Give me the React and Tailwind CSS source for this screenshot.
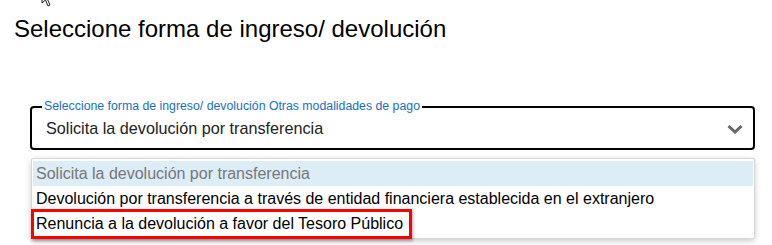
import React from "react";

export default function App() {
  const font = { fontFamily: '"Liberation Sans", Arial, sans-serif' };
  return (
    <div className="relative w-[772px] h-[245px] bg-white overflow-hidden" style={font}>
      {/* cursor tail */}
      <svg className="absolute left-[41px] top-[-12px]" width="12" height="20" viewBox="0 0 12 20">
        <path d="M1 1 L1 15 L4.5 12 L7 18 L9 17 L6.5 11.5 L11 11.5 Z" fill="white" stroke="#222" strokeWidth="1" />
      </svg>
      <div className="pl-[14px] pt-[15px] text-[24px] leading-[28px] text-black">
        Seleccione forma de ingreso/ devolución
      </div>
      <div className="relative ml-[30px] mt-[63px] w-[725px] h-[44px] border-2 border-black rounded-[4px] flex items-center pl-[14px] pr-[8px]">
        <span className="absolute left-[10px] top-[-10px] bg-white px-[2px] text-[12.3px] leading-[16px] text-[#1a6fc4]">
          Seleccione forma de ingreso/ devolución Otras modalidades de pago
        </span>
        <span className="flex-1 text-[16.2px] text-[#222] pt-[1px]">Solicita la devolución por transferencia</span>
        <svg width="18" height="12" viewBox="0 0 18 12" className="mr-[1px] mt-[2px]">
          <path d="M2.5 3 L9 9 L15.5 3" fill="none" stroke="#666" strokeWidth="3" />
        </svg>
      </div>
      <div className="ml-[31px] mt-[8px] w-[724px] h-[81px] border border-[#d6d6d6] rounded-[2px] bg-white shadow-[0_2px_6px_rgba(0,0,0,0.2)] pt-[2px] px-[1px] text-[16px] leading-[25px]">
        <div className="h-[25px] bg-[#dcedf8] text-[#777] pl-[3px]">Solicita la devolución por transferencia</div>
        <div className="h-[25px] text-black pl-[3px]">
          Devolución por transferencia a través de entidad financiera establecida en el extranjero
        </div>
        <div className="relative h-[25px] text-black pl-[3px]">
          <div className="absolute left-[-2px] top-[-2px] w-[381px] h-[30px] border-[3px] border-[#ff0000] shadow-[1px_2px_3px_rgba(0,0,0,0.35)]"></div>
          Renuncia a la devolución a favor del Tesoro Público
        </div>
      </div>
    </div>
  );
}
